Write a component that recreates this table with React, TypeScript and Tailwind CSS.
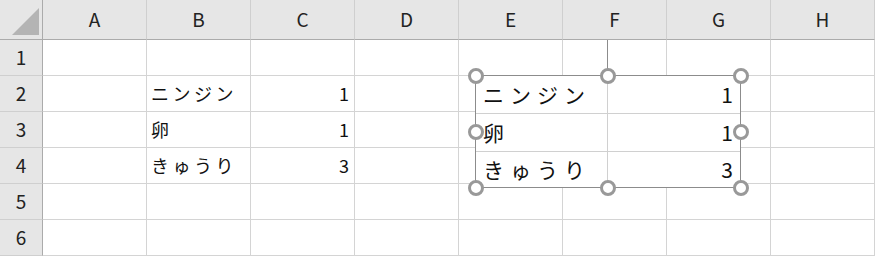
import React from "react";

const cols = ["A", "B", "C", "D", "E", "F", "G", "H"];
const rows = [1, 2, 3, 4, 5, 6];

const data: Record<string, string> = {
  B2: "ニンジン",
  C2: "1",
  B3: "卵",
  C3: "1",
  B4: "きゅうり",
  C4: "3",
};

const pictureRows = [
  { name: "ニンジン", qty: "1" },
  { name: "卵", qty: "1" },
  { name: "きゅうり", qty: "3" },
];

// handle centers relative to the picture box
const handles = [
  "left-[-8px] top-[-8px]",
  "left-[124px] top-[-8px]",
  "left-[257px] top-[-8px]",
  "left-[-8px] top-[48px]",
  "left-[257px] top-[48px]",
  "left-[-8px] top-[104px]",
  "left-[124px] top-[104px]",
  "left-[257px] top-[104px]",
];

const Handle = ({ pos }: { pos: string }) => (
  <div
    className={`absolute ${pos} w-[16px] h-[16px] rounded-full bg-white border-[3px] border-[#999999]`}
  />
);

export default function App() {
  return (
    <div
      className="relative w-[875px] h-[256px] overflow-hidden bg-white text-[#111]"
      style={{ fontFamily: '"Noto Sans CJK JP", "Noto Sans", sans-serif' }}
    >
      <div className="grid grid-cols-[43px_repeat(8,104px)] grid-rows-[40px_repeat(6,36px)]">
        {/* corner */}
        <div className="relative bg-[#e6e6e6] border-r border-b border-[#ababab]">
          <div className="absolute left-[12px] top-[8px] w-[27px] h-[27px] bg-[#b4b4b4] [clip-path:polygon(100%_0,100%_100%,0_100%)]" />
        </div>
        {cols.map((c) => (
          <div
            key={c}
            className="flex items-center justify-center bg-[#e6e6e6] border-r border-r-[#cfcfcf] border-b border-b-[#ababab] text-[19px] text-[#222]"
          >
            {c}
          </div>
        ))}

        {rows.map((r) => (
          <React.Fragment key={r}>
            <div className="flex items-center justify-center bg-[#e6e6e6] border-r border-r-[#ababab] border-b border-b-[#cfcfcf] text-[19px] text-[#222]">
              {r}
            </div>
            {cols.map((c) => {
              const v = data[`${c}${r}`];
              const isNum = v !== undefined && /^\d+$/.test(v);
              return (
                <div
                  key={c}
                  className={`flex items-center border-r border-b border-[#d4d4d4] ${
                    isNum ? "justify-end pr-[5px] text-[18px]" : "pl-[4px] text-[18px] tracking-[3.5px]"
                  }`}
                >
                  {v}
                </div>
              );
            })}
          </React.Fragment>
        ))}
      </div>

      {/* connector line up to the header */}
      <div className="absolute left-[607px] top-[40px] w-px h-[30px] bg-[#8c8c8c]" />

      {/* linked picture */}
      <div className="absolute left-[475px] top-[75px] w-[266px] h-[113px] border border-[#8c8c8c] bg-white">
        <div className="grid grid-cols-[132px_132px] grid-rows-[38px_38px_35px]">
          {pictureRows.map((p, i) => (
            <React.Fragment key={p.name}>
              <div
                className={`flex items-center pl-[7px] border-r border-[#d0d0d0] text-[21px] tracking-[6px] ${
                  i < 2 ? "border-b" : ""
                }`}
              >
                {p.name}
              </div>
              <div
                className={`flex items-center justify-end pr-[7px] text-[21px] border-[#d0d0d0] ${
                  i < 2 ? "border-b" : ""
                }`}
              >
                {p.qty}
              </div>
            </React.Fragment>
          ))}
        </div>
        {handles.map((h) => (
          <Handle key={h} pos={h} />
        ))}
      </div>
    </div>
  );
}
